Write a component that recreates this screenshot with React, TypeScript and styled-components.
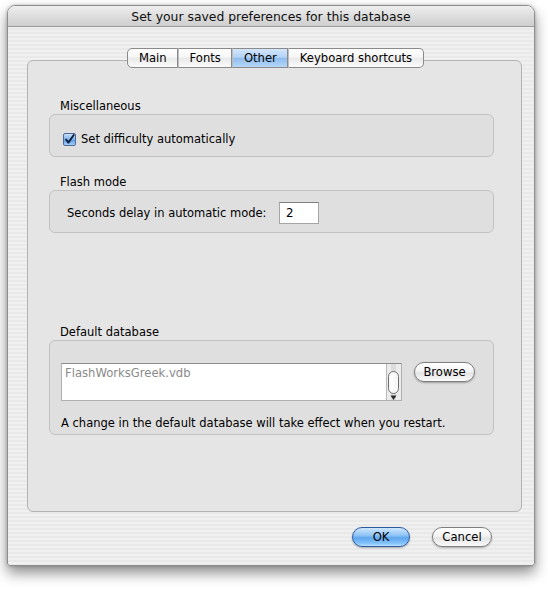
import React from 'react'
import styled, { createGlobalStyle } from 'styled-components'

const GlobalStyle = createGlobalStyle`
  html, body {
    margin: 0;
    padding: 0;
    background: #ffffff;
  }
  body {
    font-family: 'DejaVu Sans', 'Liberation Sans', sans-serif;
    font-size: 11.5px;
    color: #000;
  }
`

export default function App() {
  return (
    <>
      <GlobalStyle />
      <Page>
        <Window>
          <TitleBar>Set your saved preferences for this database</TitleBar>
          <Body>
            <TabBar>
              <Tab>Main</Tab>
              <Tab>Fonts</Tab>
              <Tab selected>Other</Tab>
              <Tab>Keyboard shortcuts</Tab>
            </TabBar>
            <TabPanel>
              <GroupLabel>Miscellaneous</GroupLabel>
              <Group>
                <CheckRow>
                  <CheckBox>
                    <svg width="13" height="13" viewBox="0 0 13 13">
                      <path d="M2.5 6.5 L5.2 10.2 L11.5 1.2" fill="none" stroke="#0d1e3d" strokeWidth="2.2" strokeLinecap="round" strokeLinejoin="round" />
                    </svg>
                  </CheckBox>
                  Set difficulty automatically
                </CheckRow>
              </Group>

              <GroupLabel spaced>Flash mode</GroupLabel>
              <Group>
                <DelayRow>
                  <DelayText>Seconds delay in automatic mode:</DelayText>
                  <NumberField>2</NumberField>
                </DelayRow>
              </Group>

              <GroupLabel far>Default database</GroupLabel>
              <Group tall>
                <FileRow>
                  <FileBox>
                    <FileName>FlashWorksGreek.vdb</FileName>
                    <Scroller>
                      <svg width="15" height="38" viewBox="0 0 15 38">
                        <rect x="0" y="0" width="15" height="38" fill="#ececec" />
                        <rect x="0" y="0" width="1" height="38" fill="#b9b9b9" />
                        <rect x="5" y="0" width="5" height="38" fill="#dcdcdc" />
                        <rect x="2.5" y="7.5" width="10" height="22" rx="5" fill="#f8f8f8" stroke="#6f6f6f" strokeWidth="1" />
                        <rect x="4.5" y="10" width="3" height="17" rx="1.5" fill="#ffffff" />
                        <path d="M4.5 31.5 L10.5 31.5 L7.5 36 Z" fill="#2a2a2a" />
                      </svg>
                    </Scroller>
                  </FileBox>
                  <PillButton width={61}>Browse</PillButton>
                </FileRow>
                <Note>A change in the default database will take effect when you restart.</Note>
              </Group>
            </TabPanel>
            <Footer>
              <PillButton width={58} primary>OK</PillButton>
              <PillButton width={60}>Cancel</PillButton>
            </Footer>
          </Body>
        </Window>
      </Page>
    </>
  )
}

const Page = styled.div`
  width: 548px;
  height: 590px;
  padding: 5px 0 0 7px;
  box-sizing: border-box;
`

const Window = styled.div`
  width: 528px;
  height: 561px;
  box-sizing: border-box;
  display: flex;
  flex-direction: column;
  border: 1px solid #8e8e8e;
  border-radius: 8px 8px 3px 3px;
  box-shadow: 0 7px 14px rgba(0, 0, 0, 0.45), 0 0 3px rgba(0, 0, 0, 0.25);
  overflow: hidden;
  background: repeating-linear-gradient(#f0f0f0 0px, #f0f0f0 2px, #e9e9e9 2px, #e9e9e9 4px);
`

const TitleBar = styled.div`
  height: 21px;
  flex: none;
  display: flex;
  align-items: center;
  justify-content: center;
  font-size: 12.4px;
  color: #111;
  background: linear-gradient(#eeeeee, #dcdcdc 55%, #cecece);
  border-bottom: 1px solid #9a9a9a;
  box-sizing: border-box;
`

const Body = styled.div`
  flex: 1;
  display: flex;
  flex-direction: column;
  padding: 21px 12px 0 19px;
`

const TabBar = styled.div`
  position: relative;
  z-index: 1;
  display: flex;
  justify-content: center;
  height: 20px;
  margin-left: 2px;
`

const Tab = styled.div<{ selected?: boolean }>`
  height: 20px;
  box-sizing: border-box;
  display: flex;
  align-items: center;
  padding: 0 10.5px;
  border: 1px solid #8a8a8a;
  border-left: 1px solid #bdbdbd;
  font-size: 11.6px;
  background: ${p => p.selected
    ? 'linear-gradient(#d3e6fb, #b3d3f6 45%, #8fbdee 52%, #b5d8fa)'
    : 'linear-gradient(#ffffff, #f6f6f6 45%, #e9e9e9 52%, #fbfbfb)'};
  &:first-child {
    border-left: 1px solid #8a8a8a;
    border-radius: 5px 0 0 5px;
  }
  &:last-child {
    border-radius: 0 5px 5px 0;
  }
`

const TabPanel = styled.div`
  margin-top: -8px;
  height: 452px;
  box-sizing: border-box;
  border: 1px solid #b3b3b3;
  border-radius: 6px;
  background: #e5e5e5;
  padding: 38px 27px 0 21px;
  display: flex;
  flex-direction: column;
`

const GroupLabel = styled.div<{ spaced?: boolean; far?: boolean }>`
  line-height: 14px;
  padding-left: 11px;
  margin-bottom: 1px;
  margin-top: ${p => (p.far ? '92px' : p.spaced ? '18px' : '0')};
`

const Group = styled.div<{ tall?: boolean }>`
  height: ${p => (p.tall ? '95px' : '43px')};
  box-sizing: border-box;
  border: 1px solid #c2c2c2;
  border-radius: 6px;
  background: #dfdfdf;
  display: flex;
  flex-direction: column;
`

const CheckRow = styled.div`
  display: flex;
  align-items: center;
  gap: 5px;
  padding: 16px 0 0 13px;
  height: 16px;
`

const CheckBox = styled.div`
  width: 13px;
  height: 13px;
  box-sizing: border-box;
  border: 1px solid #4b6b98;
  border-radius: 2px;
  background: linear-gradient(#c7def7, #7eb2ea 50%, #5c9ce3 55%, #a6cdf6);
  display: flex;
  align-items: center;
  justify-content: center;
`

const DelayRow = styled.div`
  display: flex;
  align-items: center;
  padding: 11px 0 0 17px;
  height: 22px;
`

const DelayText = styled.span`
  width: 212px;
`

const NumberField = styled.div`
  width: 40px;
  height: 22px;
  box-sizing: border-box;
  background: #fff;
  border: 1px solid #a5a5a5;
  border-top-color: #7f7f7f;
  padding: 3px 0 0 6px;
  font-size: 11.8px;
`

const FileRow = styled.div`
  display: flex;
  align-items: flex-start;
  gap: 12px;
  padding: 22px 0 0 11px;
`

const FileBox = styled.div`
  width: 341px;
  height: 38px;
  box-sizing: border-box;
  background: #fff;
  border: 1px solid #b0b0b0;
  border-top-color: #8d8d8d;
  display: flex;
  justify-content: space-between;
`

const FileName = styled.div`
  color: #8a8a8a;
  padding: 2px 0 0 3px;
  font-size: 11.6px;
`

const Scroller = styled.div`
  width: 15px;
  height: 36px;
  overflow: hidden;
  display: flex;
`

const PillButton = styled.div<{ width: number; primary?: boolean }>`
  width: ${p => p.width}px;
  height: 20px;
  box-sizing: border-box;
  margin-top: -1px;
  border-radius: 10px;
  display: flex;
  align-items: center;
  justify-content: center;
  font-size: 11.6px;
  border: 1px solid ${p => (p.primary ? '#2f5c9f' : '#7f7f7f')};
  background: ${p => p.primary
    ? 'linear-gradient(#cfe6fd, #91c5f6 40%, #5ea6ee 55%, #83c2fa 85%, #b8e0ff)'
    : 'linear-gradient(#ffffff, #f4f4f4 45%, #e4e4e4 55%, #fafafa)'};
  box-shadow: 0 1px 2px rgba(0, 0, 0, 0.3);
`

const Note = styled.div`
  padding: 15px 0 0 11px;
  line-height: 14px;
`

const Footer = styled.div`
  display: flex;
  justify-content: flex-end;
  gap: 22px;
  padding: 16px 30px 0 0;
`
